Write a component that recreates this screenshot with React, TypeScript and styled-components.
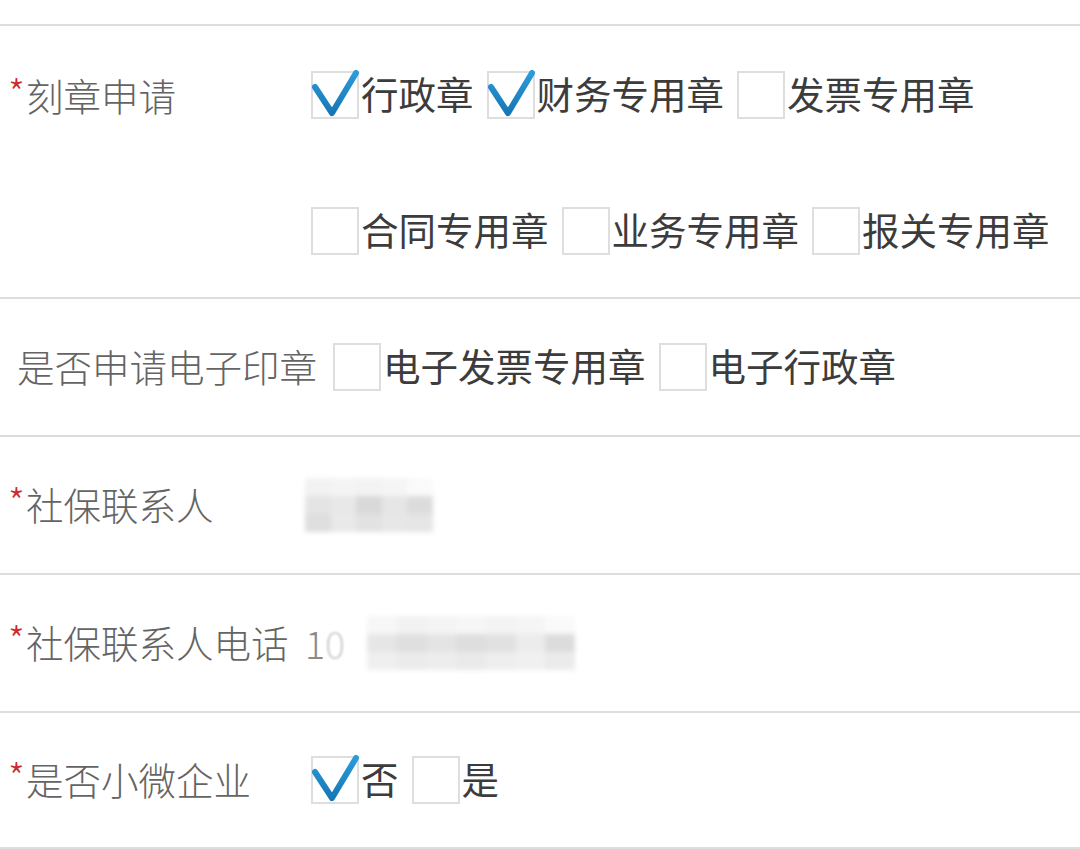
import React from 'react';
import styled, { createGlobalStyle } from 'styled-components';

const GlobalStyle = createGlobalStyle`
  html, body {
    margin: 0;
    padding: 0;
    background: #fff;
  }
  body {
    font-family: "Noto Sans CJK SC", "Noto Sans", sans-serif;
  }
`;

type OptionItem = { text: string; checked?: boolean };

const Form = styled.div`
  padding-top: 24px;
  width: 1080px;
`;

const Row = styled.div<{ $tall?: boolean; $last?: boolean }>`
  display: flex;
  align-items: ${(p) => (p.$tall ? 'flex-start' : 'center')};
  border-top: 2px solid #dddddd;
  border-bottom: ${(p) => (p.$last ? '2px solid #dddddd' : 'none')};
  height: ${(p) => (p.$tall ? 273 : 138)}px;
  padding-top: ${(p) => (p.$tall ? '45px' : '0')};
  box-sizing: border-box;
`;

const Label = styled.div<{ $indent?: number }>`
  flex: 0 0 auto;
  min-width: 305px;
  padding-left: ${(p) => p.$indent ?? 8}px;
  padding-right: 15px;
  padding-bottom: 3px;
  box-sizing: border-box;
  font-size: 37.5px;
  line-height: 48px;
  font-weight: 300;
  color: #646464;
  white-space: nowrap;
  display: flex;
  align-items: center;
`;

const Star = styled.span`
  display: inline-block;
  width: 18px;
  height: 48px;
  color: #cc2a2e;
  font-size: 38px;
  line-height: 48px;
  align-self: flex-start;
  margin-top: -3px;
`;

const Options = styled.div<{ $inset?: number }>`
  display: flex;
  flex-direction: column;
  gap: 88px;
  padding-left: ${(p) => p.$inset ?? 6}px;
`;

const OptionLine = styled.div`
  display: flex;
  align-items: center;
  gap: 13px;
`;

const Option = styled.label`
  display: flex;
  align-items: center;
  gap: 2px;
  height: 48px;
  font-size: 37.5px;
  color: #3c3c3c;
  white-space: nowrap;
`;

const OptionText = styled.span`
  line-height: 44px;
  padding-bottom: 4px;
`;

const Box = styled.span`
  position: relative;
  display: inline-block;
  flex: 0 0 auto;
  width: 48px;
  height: 48px;
  box-sizing: border-box;
  border: 2px solid #dedede;
  background: #fff;
`;

const Tick = styled.svg`
  position: absolute;
  left: -2px;
  top: -2px;
  overflow: visible;
`;

const Value = styled.div`
  display: flex;
  align-items: center;
  font-size: 37.5px;
  line-height: 48px;
  font-weight: 300;
  color: #8a8a8a;
  white-space: nowrap;
`;

const Mosaic = styled.div<{ $cols: number; $w: number; $h: number; $offset?: number }>`
  display: grid;
  grid-template-columns: repeat(${(p) => p.$cols}, 1fr);
  width: ${(p) => p.$w}px;
  height: ${(p) => p.$h}px;
  margin-left: ${(p) => p.$offset ?? 0}px;
  filter: blur(2.5px);
`;

const Cell = styled.span<{ $shade: string }>`
  background: ${(p) => p.$shade};
`;

const Faded = styled.span`
  color: #cdcdcd;
  filter: blur(1px);
`;

const CheckBox: React.FC<{ checked?: boolean }> = ({ checked }) => (
  <Box>
    {checked && (
      <Tick width="48" height="48" viewBox="0 0 48 48">
        <defs>
          <linearGradient id="tickGrad" x1="0" y1="0" x2="0" y2="1">
            <stop offset="0" stopColor="#2b9bd9" />
            <stop offset="1" stopColor="#1677b6" />
          </linearGradient>
        </defs>
        <path
          d="M4 16 L21 42 L45 2"
          fill="none"
          stroke="url(#tickGrad)"
          strokeWidth="6"
          strokeLinecap="round"
          strokeLinejoin="round"
        />
      </Tick>
    )}
  </Box>
);

const OptionRow: React.FC<{ items: OptionItem[] }> = ({ items }) => (
  <OptionLine>
    {items.map((it) => (
      <Option key={it.text}>
        <CheckBox checked={it.checked} />
        <OptionText>{it.text}</OptionText>
      </Option>
    ))}
  </OptionLine>
);

const Redaction: React.FC<{ shades: string[]; cols: number; w: number; h: number; offset?: number }> = ({
  shades,
  cols,
  w,
  h,
  offset,
}) => (
  <Mosaic $cols={cols} $w={w} $h={h} $offset={offset}>
    {shades.map((s, i) => (
      <Cell key={i} $shade={s} />
    ))}
  </Mosaic>
);

const RequiredLabel: React.FC<{ children: React.ReactNode }> = ({ children }) => (
  <Label>
    <Star>*</Star>
    {children}
  </Label>
);

export default function App() {
  return (
    <>
      <GlobalStyle />
      <Form>
        <Row $tall>
          <RequiredLabel>刻章申请</RequiredLabel>
          <Options>
            <OptionRow
              items={[
                { text: '行政章', checked: true },
                { text: '财务专用章', checked: true },
                { text: '发票专用章' },
              ]}
            />
            <OptionRow
              items={[{ text: '合同专用章' }, { text: '业务专用章' }, { text: '报关专用章' }]}
            />
          </Options>
        </Row>
        <Row>
          <Label $indent={17}>是否申请电子印章</Label>
          <Options $inset={1}>
            <OptionRow items={[{ text: '电子发票专用章' }, { text: '电子行政章' }]} />
          </Options>
        </Row>
        <Row>
          <RequiredLabel>社保联系人</RequiredLabel>
          <Value>
            <Redaction
              cols={5}
              w={128}
              h={54}
              shades={[
                '#f2f2f2', '#f4f4f4', '#f3f3f3', '#f5f5f5', '#fafafa',
                '#e4e4e4', '#e8e8e8', '#d9d9d9', '#e6e6e6', '#dcdcdc',
                '#dedede', '#e9e9e9', '#e2e2e2', '#e7e7e7', '#e5e5e5',
              ]}
            />
          </Value>
        </Row>
        <Row>
          <RequiredLabel>社保联系人电话</RequiredLabel>
          <Value>
            1<Faded>0</Faded>
            <Redaction
              offset={22}
              cols={7}
              w={208}
              h={54}
              shades={[
                '#f7f7f7', '#f2f2f2', '#f4f4f4', '#f6f6f6', '#f3f3f3', '#f5f5f5', '#fafafa',
                '#e6e6e6', '#dfdfdf', '#e4e4e4', '#dedede', '#e1e1e1', '#ececec', '#dcdcdc',
                '#efefef', '#ebebeb', '#ededed', '#eaeaea', '#eeeeee', '#f0f0f0', '#ebebeb',
              ]}
            />
          </Value>
        </Row>
        <Row $last>
          <RequiredLabel>是否小微企业</RequiredLabel>
          <Options>
            <OptionRow items={[{ text: '否', checked: true }, { text: '是' }]} />
          </Options>
        </Row>
      </Form>
    </>
  );
}
